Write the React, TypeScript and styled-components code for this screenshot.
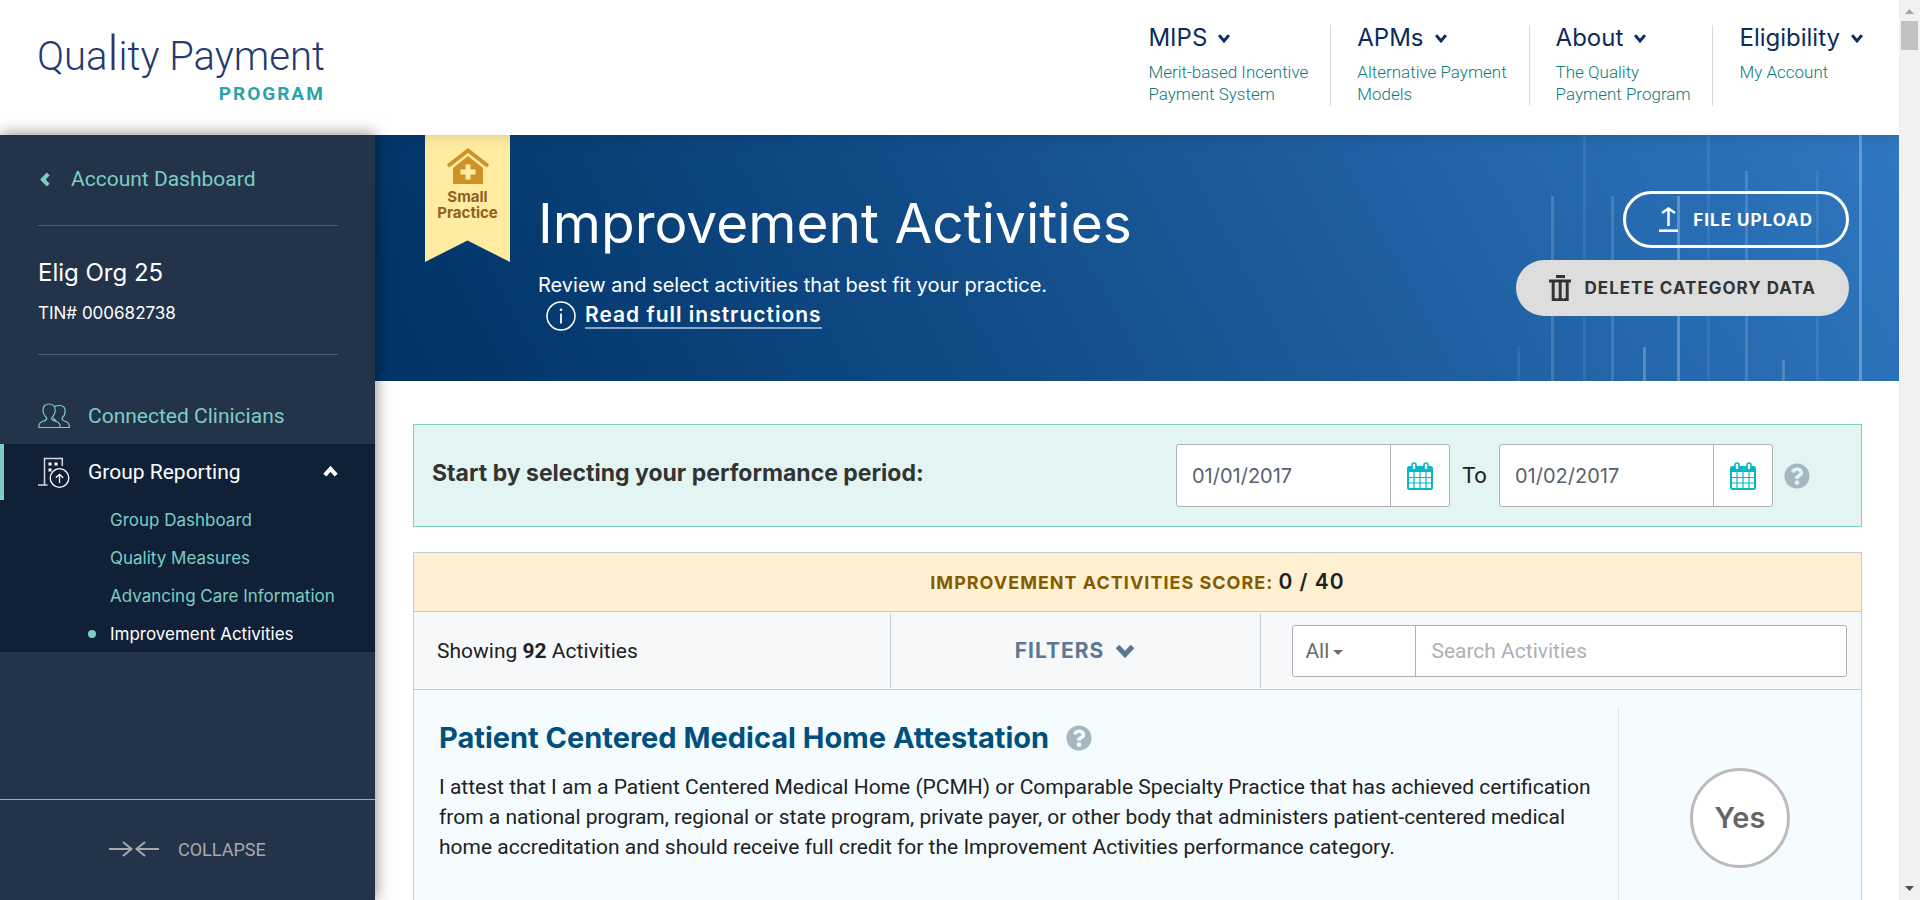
import React from 'react';
import styled, { createGlobalStyle, css } from 'styled-components';
import { FaQuestionCircle } from 'react-icons/fa';

const body = `Roboto, "Liberation Sans", sans-serif`;
const strong = `Inter, Roboto, sans-serif`;
const mint = '#7ecdc2';

const Global = createGlobalStyle`
  *, *::before, *::after { box-sizing: border-box; }
  body { margin: 0; font-family: ${body}; color: #212121; background: #fff; }
  h1, h2, p, ul { margin: 0; padding: 0; }
  ul { list-style: none; }
  a { color: inherit; text-decoration: none; }
  button, input, select { font: inherit; color: inherit; margin: 0; padding: 0; border: 0; background: none; outline: none; }
  button { cursor: pointer; }
  svg { display: block; flex: none; }
`;

const Window = styled.div`display: flex; height: 100vh; overflow: hidden;`;
const Page = styled.div`flex: 1; min-width: 0; display: flex; flex-direction: column;`;

/* Scroll bar */
const ScrollTrack = styled.div`
  position: relative; z-index: 2; width: 21px; flex: none; background: #f1f1f1;
  display: flex; flex-direction: column; align-items: center;
  padding: 9px 0;
`;
const ScrollThumb = styled.div`width: 17px; height: 29px; margin: 7px 0 auto; background: #c1c1c1;`;

/* Header */
const Header = styled.header`
  position: relative; z-index: 1; height: 135px; flex: none;
  display: flex; justify-content: space-between;
  padding: 0 35px 0 37px; background: #fff;
  box-shadow: 0 0 15px rgba(0, 0, 0, 0.15);
`;
const Logo = styled.a`
  display: flex; flex-direction: column; align-items: flex-end;
  padding-top: 33px; color: #243a70;
`;
const LogoName = styled.span`font-size: 40px; font-weight: 300; line-height: 48px;`;
const TallLetter = styled.span`font-size: 49px; line-height: 0;`;
const LogoSub = styled.span`
  font-size: 19px; font-weight: 700; line-height: 24px; letter-spacing: 2px; color: #26a5ab;
  margin-top: 1px;
`;
const Nav = styled.nav`display: flex; padding: 25px 0 29px;`;
const NavItem = styled.a`
  display: block; color: #0b2c5c;
  & + & { margin-left: 26px; }
  &:not(:last-child) { padding-right: 22px; border-right: 1px solid #d9dcdf; }
`;
const NavTitle = styled.span`
  display: flex; align-items: center; gap: 10px;
  font: 400 24px/25px ${strong}; margin-bottom: 11px;
`;
const NavSub = styled.span`display: block; font-size: 17px; font-weight: 300; line-height: 22px; color: #10797c;`;

/* Sidebar */
const Main = styled.div`flex: 1; min-height: 0; display: flex;`;
const Sidebar = styled.aside`
  position: relative; z-index: 2; width: 375px; flex: none;
  display: flex; flex-direction: column;
  background: #22334a; color: #fff; box-shadow: 0 0 15px rgba(0, 0, 0, 0.5);
`;
const SideSection = styled.div`margin: 0 37px 0 38px; border-bottom: 1px solid #4d5c70;`;
const BackLink = styled.a`
  display: flex; align-items: center; gap: 20px; padding: 32px 0 34px 2px;
  font-size: 21px; line-height: 24px; color: ${mint};
`;
const OrgName = styled.p`padding-top: 32px; font: 400 24px/30px ${strong};`;
const OrgTin = styled.p`padding: 14px 0 30px; font: 400 17px/22px ${strong};`;
const SideNav = styled.nav`margin-top: 33px;`;
const SideLink = styled.a<{ $open?: boolean }>`
  display: flex; align-items: center; gap: 18px; height: 56px; padding: 0 36px 0 38px;
  font-size: 21px; color: ${(p) => (p.$open ? '#fff' : mint)};
  ${(p) => p.$open && css`border-left: 4px solid ${mint}; padding-left: 34px;`}
  & > :last-child:not(span) { margin-left: auto; }
`;
const SideGroup = styled.div`background: #0f2037;`;
const SubList = styled.ul`display: flex; flex-direction: column; gap: 2px; padding: 2px 0 0 88px;`;
const SubLink = styled.a<{ $current?: boolean }>`
  display: flex; align-items: center; font: 400 17px/36px ${strong};
  color: ${(p) => (p.$current ? '#fff' : mint)};
  &::before {
    content: ''; width: 8px; height: 8px; margin-right: 14px; border-radius: 50%;
    background: ${(p) => (p.$current ? mint : 'transparent')};
  }
`;
const Collapse = styled.button`
  margin-top: auto; height: 101px; padding: 39px 0 0 109px; border-top: 1px solid #a5abb2;
  display: flex; align-items: flex-start; gap: 19px; font-size: 18px; line-height: 22px; color: #a9a9a9;
  svg { margin-top: 2px; }
`;

/* Banner */
const Content = styled.main`flex: 1; min-width: 0; overflow: hidden;`;
const Banner = styled.section`
  position: relative; display: flex; height: 246px; padding: 0 50px; color: #fff;
  background: linear-gradient(62deg, #013468 4%, #2f77c0 100%);
`;
const Bars = styled.svg`position: absolute; right: 0; top: 0;`;
const Ribbon = styled.div`
  width: 85px; height: 127px; flex: none; padding-top: 13px;
  display: flex; flex-direction: column; align-items: center; gap: 5px;
  background: #ffeca0; color: #93601c;
  clip-path: polygon(0 0, 100% 0, 100% 100%, 50% 83%, 0 100%);
  font: 700 15px/16px ${strong}; text-align: center;
`;
const Intro = styled.div`flex: 1; padding: 55px 0 0 28px;`;
const Title = styled.h1`font: 400 55px/66px ${strong}; margin-bottom: 16px;`;
const Lead = styled.p`font: 400 20px/26px ${strong}; margin-bottom: 3px;`;
const InfoRow = styled.div`display: flex; align-items: center; gap: 9px; padding-left: 8px;`;
const InfoLink = styled.a`
  font: 600 21px/24px ${strong}; letter-spacing: 1px; border-bottom: 2px solid #8ba6c6;
`;
const Actions = styled.div`position: relative; display: flex; flex-direction: column; align-items: flex-end; gap: 12px; padding-top: 56px;`;
const Pill = styled.button<{ $solid?: boolean }>`
  display: flex; align-items: center; height: 57px; padding: 0 33px; border-radius: 29px;
  font: 700 17px/20px ${strong}; letter-spacing: 1px;
  ${(p) => p.$solid
    ? css`gap: 14px; height: 56px; background: #ddd; color: #333;`
    : css`gap: 15px; border: 3px solid #fff; color: #fff;`}
`;

/* Performance period */
const Panels = styled.div`padding: 43px 37px 0 38px;`;
const Period = styled.section`
  display: flex; align-items: center; height: 103px; padding: 0 51px 0 18px; margin-bottom: 25px;
  background: #e2f5f3; border: 1px solid ${mint};
`;
const PeriodLabel = styled.h2`flex: 1; padding-bottom: 5px; font: 700 23px/28px ${strong}; color: #333;`;
const DateGroup = styled.div`display: flex; width: 274px; height: 63px; border: 1px solid #aeb0b5; border-radius: 3px; background: #fff;`;
const DateInput = styled.input`flex: 1; min-width: 0; padding-left: 15px; font: 400 20px/24px ${strong}; color: #5b616b;`;
const DateButton = styled.button`
  width: 59px; display: flex; align-items: center; justify-content: center; border-left: 1px solid #aeb0b5;
`;
const To = styled.span`width: 49px; text-align: center; font-size: 22px;`;
const HelpButton = styled.button`display: flex; margin-left: 11px; color: #a5b8c2;`;

/* Activities table */
const Activities = styled.section`border: 1px solid #c3ccd5;`;
const Score = styled.p`
  height: 59px; border-bottom: 1px solid #c3ccd5; background: #fff0d2; text-align: center;
  font: 700 18px/58px ${strong}; letter-spacing: 1px; color: #855b00;
  strong { font-size: 21px; font-weight: 600; color: #212121; }
`;
const Toolbar = styled.div`
  display: grid; grid-template-columns: 477fr 371fr 600fr; height: 78px;
  background: #f6f8fa; border-bottom: 1px solid #c3ccd5;
`;
const Cell = styled.div`
  display: flex; align-items: center; margin: 1px 0; font-size: 21px;
  &:not(:last-child) { border-right: 1px solid #c3ccd5; }
`;
const Count = styled.p`padding-left: 23px; white-space: pre;`;
const FilterButton = styled.button`
  flex: 1; display: flex; align-items: center; justify-content: center; gap: 10px;
  font: 700 21px/24px ${strong}; letter-spacing: 1px; color: #5b7992;
`;
const Search = styled.div`
  flex: 1; display: flex; height: 52px; margin: 0 14px 0 31px;
  border: 1px solid #aeb0b5; border-radius: 3px; background: #fff;
`;
const SelectBox = styled.div`
  position: relative; width: 123px; border-right: 1px solid #aeb0b5; color: #6b6b6b;
  svg { position: absolute; left: 40px; top: 24px; pointer-events: none; }
`;
const Select = styled.select`width: 100%; height: 100%; padding-left: 12px; appearance: none;`;
const SearchInput = styled.input`
  flex: 1; min-width: 0; padding-left: 15px;
  &::placeholder { color: #aeb0b5; opacity: 1; }
`;
const Card = styled.article`display: flex; padding: 18px 0 0 25px; background: #f4fcff;`;
const CardText = styled.div`flex: 1; padding: 12px 20px 60px 0; border-right: 1px solid #dce4e8;`;
const CardHead = styled.div`display: flex; align-items: center; gap: 6px; margin-bottom: 16px;`;
const CardTitle = styled.h2`font: 700 29px/36px ${strong}; color: #004f7c;`;
const CardCopy = styled.p`font-size: 21px; line-height: 30px;`;
const CardAnswer = styled.div`width: 242px; display: flex; justify-content: center; padding-top: 60px;`;
const YesButton = styled.button`
  width: 100px; height: 100px; border: 3px solid #bbb; border-radius: 50%; background: #fff;
  font: 600 29px/32px ${strong}; color: #666;
`;

const Chevron = ({ w, h, dir = 'down', stroke }: { w: number; h: number; dir?: 'down' | 'up' | 'left'; stroke: number }) => {
  const m = stroke * 0.7;
  const points = {
    down: `${m},${m} ${w / 2},${h - m} ${w - m},${m}`,
    up: `${m},${h - m} ${w / 2},${m} ${w - m},${h - m}`,
    left: `${w - m},${m} ${m},${h / 2} ${w - m},${h - m}`,
  }[dir];
  return (
    <svg width={w} height={h} fill="none" stroke="currentColor" strokeWidth={stroke} aria-hidden>
      <polyline points={points} />
    </svg>
  );
};

const PeopleIcon = () => (
  <svg width="32" height="26" viewBox="0 0 32 26" fill="none" stroke="currentColor" strokeWidth="1.2" aria-hidden>
    <path d="M8.6 14.6C6.2 12.6 5 10 5 7 5 3 7.600 1 11 1s6.200 2 6.200 6c0 3-1.200 5.600-3.400 7.600-.5 1.600.3 2.300 2 3l3.200 1.200c2.200.8 3.200 2 3.200 5.700H.8c0-3.700 1-4.900 3-5.700l3-1.200c1.700-.7 2.300-1.400 1.800-3z" />
    <path d="M16.500 3.400C17.800 2.800 19.800 2.500 21.500 2.500c3.400 0 5.700 2 5.700 5.500 0 2.800-1 5-3 6.800-.5 1.500.2 2.200 1.700 2.900l2.500 1c2 .8 3 2 3 5.800h-9M15.200 14.800l3.200 3.700" />
  </svg>
);

const BuildingIcon = () => (
  <svg width="32" height="31" viewBox="0 0 32 31" fill="none" stroke="#d5d9de" aria-hidden>
    <path d="M0 28h9.500M6.500 28V1.500h17.800V9" strokeWidth="1.500" />
    <circle cx="21.500" cy="21" r="9.300" stroke="#fff" strokeWidth="1.300" />
    <path d="M21.500 26v-8.500M17.800 20.800l3.700-3.500 3.700 3.500" stroke="#fff" strokeWidth="1.300" />
    <path d="M10.500 5.500h3v3h-3zM16.500 5.500h3v3h-3zM10.500 11.500h3v3h-3z" fill="#fff" stroke="none" />
  </svg>
);

const CollapseIcon = () => (
  <svg width="50" height="16" fill="none" stroke="currentColor" strokeWidth="2" aria-hidden>
    <path d="M0 8h22M14 1l8.500 7-8.500 7M50 8H28M36 1l-8.500 7 8.500 7" />
  </svg>
);

const HomeIcon = () => (
  <svg width="44" height="36" viewBox="0 0 44 36" aria-hidden>
    <path d="M2 18 22 2.500 42 18" fill="none" stroke="#cd9328" strokeWidth="4" />
    <path d="M22 8 37 20v15a1 1 0 0 1-1 1H8a1 1 0 0 1-1-1V20z" fill="#cd9328" />
    <path d="M19.500 16.500h5v5h5v5h-5v5h-5v-5h-5v-5h5z" fill="#ffeca0" />
  </svg>
);

const InfoIcon = () => (
  <svg width="30" height="30" fill="none" stroke="#fff" aria-hidden>
    <circle cx="15" cy="15" r="14" strokeWidth="1.500" />
    <path d="M15 12.500v10" strokeWidth="1.800" />
    <circle cx="15" cy="8.700" r="1.300" fill="#fff" stroke="none" />
  </svg>
);

const UploadIcon = () => (
  <svg width="19" height="25" fill="none" stroke="#fff" aria-hidden>
    <path d="M9.500 19V2M3 6l6.500-4.500L16 6" strokeWidth="2.500" />
    <path d="M0 23.700h19" strokeWidth="2.600" />
  </svg>
);

const TrashIcon = () => (
  <svg width="22" height="26" fill="none" stroke="#333" aria-hidden>
    <path d="M7 1.500h9" strokeWidth="3" />
    <path d="M0 6h22" strokeWidth="3" />
    <path d="M4.200 7v17.500h14V7M11.200 7v17" strokeWidth="3" />
    <path d="M8 7v17M14.500 7v17" stroke="#ccc" strokeWidth="1" />
  </svg>
);

const CalendarIcon = () => (
  <svg width="26" height="28" viewBox="0 0 26 28" fill="none" stroke="#04b9c6" aria-hidden>
    <rect x="1" y="5" width="24" height="22" rx="1.500" strokeWidth="2" />
    <path d="M1 5h24v5H1z" fill="#04b9c6" stroke="none" />
    <path d="M1 15.500h24M1 21h24M7 10v17M13 10v17M19 10v17" strokeWidth="1.200" />
    <rect x="5" y="1" width="4" height="7" rx="2" fill="#fff" strokeWidth="1.600" />
    <rect x="17" y="1" width="4" height="7" rx="2" fill="#fff" strokeWidth="1.600" />
  </svg>
);

const bars: [number, number, number][] = [
  [18, 212, 0.07], [52, 61, 0.16], [84, 0, 0.08], [112, 61, 0.14], [144, 212, 0.24], [178, 61, 0.26],
  [208, 0, 0.08], [246, 36, 0.15], [283, 225, 0.18], [317, 36, 0.08], [360, 0, 0.28],
];

const navItems = [
  { title: 'MIPS', lines: ['Merit-based Incentive', 'Payment System'] },
  { title: 'APMs', lines: ['Alternative Payment', 'Models'] },
  { title: 'About', lines: ['The Quality', 'Payment Program'] },
  { title: 'Eligibility', lines: ['My Account'] },
];

const reportingLinks = ['Group Dashboard', 'Quality Measures', 'Advancing Care Information', 'Improvement Activities'];

const Help = ({ label }: { label: string }) => (
  <HelpButton aria-label={label}><FaQuestionCircle size={26} /></HelpButton>
);

const DateField = ({ label, value }: { label: string; value: string }) => (
  <DateGroup>
    <DateInput type="text" aria-label={label} defaultValue={value} />
    <DateButton aria-label={`Choose ${label.toLowerCase()}`}><CalendarIcon /></DateButton>
  </DateGroup>
);

export default function App() {
  return (
    <Window>
      <Global />
      <Page>
        <Header>
          <Logo href="#">
            <LogoName>Qua<TallLetter>l</TallLetter>ity Payment</LogoName>
            <LogoSub>PROGRAM</LogoSub>
          </Logo>
          <Nav>
            {navItems.map((item) => (
              <NavItem href="#" key={item.title}>
                <NavTitle>{item.title}<Chevron w={14} h={10} stroke={3} /></NavTitle>
                {item.lines.map((line) => <NavSub key={line}>{line}</NavSub>)}
              </NavItem>
            ))}
          </Nav>
        </Header>
        <Main>
          <Sidebar>
            <SideSection>
              <BackLink href="#"><Chevron w={11} h={17} dir="left" stroke={4} />Account Dashboard</BackLink>
            </SideSection>
            <SideSection>
              <OrgName>Elig Org 25</OrgName>
              <OrgTin>TIN# 000682738</OrgTin>
            </SideSection>
            <SideNav>
              <SideLink href="#"><PeopleIcon /><span>Connected Clinicians</span></SideLink>
              <SideGroup>
                <SideLink href="#" $open>
                  <BuildingIcon /><span>Group Reporting</span><Chevron w={17} h={12} dir="up" stroke={4} />
                </SideLink>
                <SubList>
                  {reportingLinks.map((name) => (
                    <li key={name}><SubLink href="#" $current={name === 'Improvement Activities'}>{name}</SubLink></li>
                  ))}
                </SubList>
              </SideGroup>
            </SideNav>
            <Collapse><CollapseIcon />COLLAPSE</Collapse>
          </Sidebar>
          <Content>
            <Banner>
              <Bars width="400" height="246" aria-hidden>
                {bars.map(([x, y, opacity]) => (
                  <rect key={x} x={x} y={y} width="3" height={246 - y} fill="#fff" opacity={opacity} />
                ))}
              </Bars>
              <Ribbon><HomeIcon /><span>Small<br />Practice</span></Ribbon>
              <Intro>
                <Title>Improvement Activities</Title>
                <Lead>Review and select activities that best fit your practice.</Lead>
                <InfoRow><InfoIcon /><InfoLink href="#">Read full instructions</InfoLink></InfoRow>
              </Intro>
              <Actions>
                <Pill><UploadIcon />FILE UPLOAD</Pill>
                <Pill $solid><TrashIcon />DELETE CATEGORY DATA</Pill>
              </Actions>
            </Banner>
            <Panels>
              <Period>
                <PeriodLabel>Start by selecting your performance period:</PeriodLabel>
                <DateField label="Start date" value="01/01/2017" />
                <To>To</To>
                <DateField label="End date" value="01/02/2017" />
                <Help label="About the performance period" />
              </Period>
              <Activities>
                <Score>IMPROVEMENT ACTIVITIES SCORE: <strong>0 / 40</strong></Score>
                <Toolbar>
                  <Cell><Count>Showing <b>92</b> Activities</Count></Cell>
                  <Cell><FilterButton>FILTERS<Chevron w={22} h={15} stroke={5} /></FilterButton></Cell>
                  <Cell>
                    <Search>
                      <SelectBox>
                        <Select aria-label="Search in"><option>All</option></Select>
                        <svg width="10" height="5" fill="currentColor" aria-hidden><path d="M0 0h10L5 5z" /></svg>
                      </SelectBox>
                      <SearchInput type="text" aria-label="Search activities" placeholder="Search Activities" />
                    </Search>
                  </Cell>
                </Toolbar>
                <Card>
                  <CardText>
                    <CardHead>
                      <CardTitle>Patient Centered Medical Home Attestation</CardTitle>
                      <Help label="About attestation" />
                    </CardHead>
                    <CardCopy>
                      I attest that I am a Patient Centered Medical Home (PCMH) or Comparable Specialty Practice that has achieved
                      certification from a national program, regional or state program, private payer, or other body that administers
                      patient-centered medical home accreditation and should receive full credit for the Improvement Activities
                      performance category.
                    </CardCopy>
                  </CardText>
                  <CardAnswer><YesButton>Yes</YesButton></CardAnswer>
                </Card>
              </Activities>
            </Panels>
          </Content>
        </Main>
      </Page>
      <ScrollTrack aria-hidden>
        <svg width="9" height="5" fill="#a3a3a3"><path d="M0 5h9L4.500 0z" /></svg>
        <ScrollThumb />
        <svg width="9" height="5" fill="#505050"><path d="M0 0h9L4.500 5z" /></svg>
      </ScrollTrack>
    </Window>
  );
}
